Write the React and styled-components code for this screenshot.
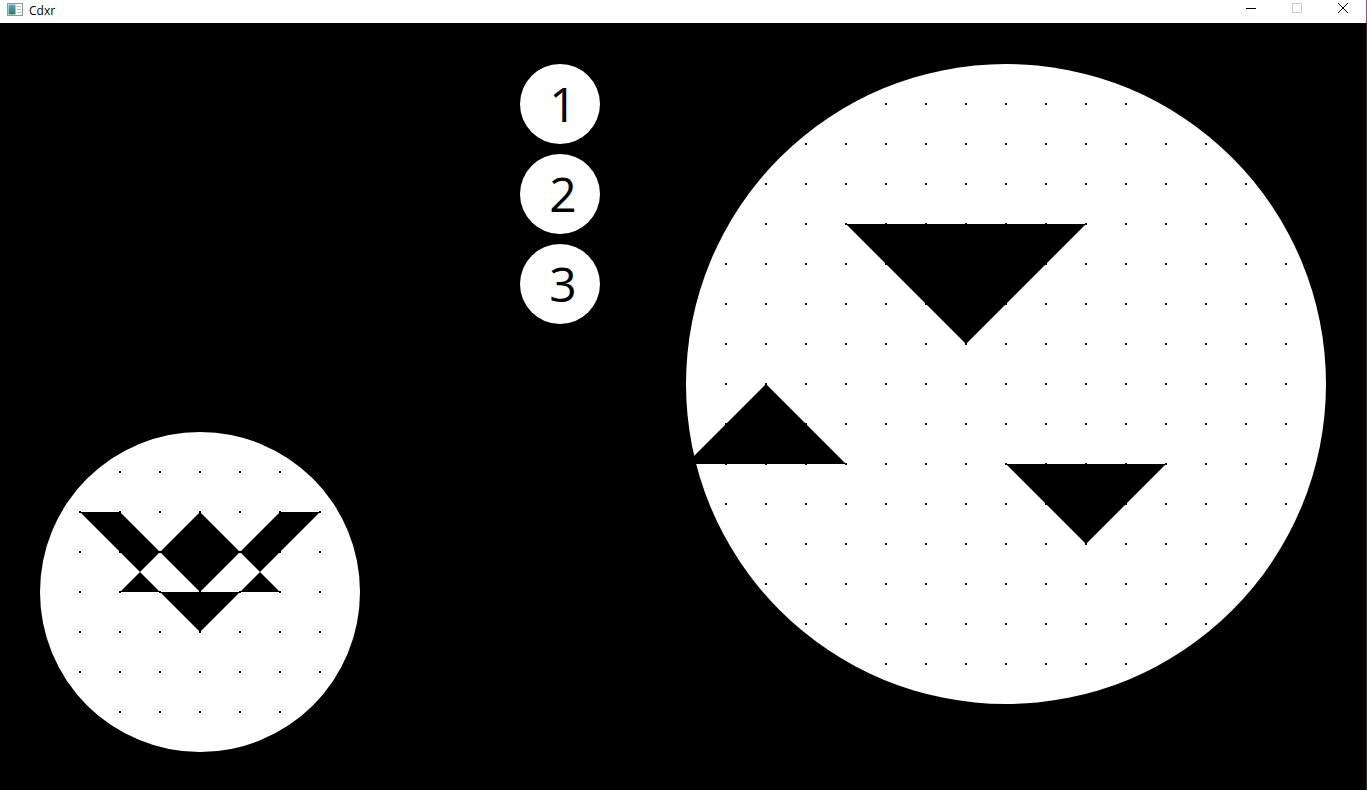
import React from "react";
import styled, { createGlobalStyle } from "styled-components";

const GlobalStyle = createGlobalStyle`
  html, body { margin: 0; padding: 0; background: #000; overflow: hidden; }
  * { box-sizing: border-box; }
`;

const Window = styled.div`
  width: 1367px;
  height: 790px;
  display: flex;
  flex-direction: column;
  background: #000;
`;

const TitleBar = styled.div`
  height: 23px;
  flex: none;
  display: flex;
  align-items: center;
  background: #fff;
  border-right: 1px solid #a04a86;
  padding-left: 7px;
`;

const AppIcon = styled.svg`
  width: 16px;
  height: 14px;
  flex: none;
  margin-top: -3px;
`;

const Title = styled.span`
  margin-left: 6px;
  font-family: "Open Sans", "Noto Sans", sans-serif;
  font-size: 12px;
  color: #000;
  flex: 1;
  margin-top: -2px;
`;

const Controls = styled.div`
  display: flex;
  height: 100%;
`;

const CtrlButton = styled.div`
  width: 46px;
  height: 100%;
  display: flex;
  align-items: flex-start;
  justify-content: center;
  padding-top: 2px;
`;

const Canvas = styled.div`
  flex: 1;
  position: relative;
  background: #000;
  border-right: 1px solid #4a1540;
`;

const NumberColumn = styled.div`
  position: absolute;
  left: 520px;
  top: 41px;
  display: flex;
  flex-direction: column;
  gap: 10px;
`;

const NumberBadge = styled.div`
  width: 80px;
  height: 80px;
  border-radius: 50%;
  background: #fff;
  display: flex;
  align-items: center;
  justify-content: center;
  padding-left: 6px;
  font-family: "Open Sans", "Noto Sans", sans-serif;
  font-size: 48px;
  line-height: 1;
  color: #000;
`;

const BoardSvg = styled.svg`
  position: absolute;
  left: ${(p) => p.$left}px;
  top: ${(p) => p.$top}px;
  overflow: visible;
`;

function Board({ left, top, size, shapes }) {
  const r = size / 2;
  const dots = [];
  for (let i = -8; i <= 8; i++) {
    for (let j = -8; j <= 8; j++) {
      const x = r + i * 40;
      const y = r + j * 40;
      if (Math.hypot(x - r, y - r) < r - 0.5) dots.push([x, y]);
    }
  }
  const d = shapes
    .map((pts) => "M" + pts.map((p) => p.join(" ")).join(" L") + " Z")
    .join(" ");
  return (
    <BoardSvg $left={left} $top={top} width={size} height={size} viewBox={`0 0 ${size} ${size}`}>
      <circle cx={r} cy={r} r={r} fill="#fff" />
      <g fill="#000" shapeRendering="crispEdges">
        {dots.map(([x, y]) => (
          <rect key={`${x}-${y}`} x={x - 1} y={y - 1} width="2" height="2" />
        ))}
      </g>
      <path d={d} fill="#000" fillRule="evenodd" />
    </BoardSvg>
  );
}

const smallShapes = [
  [[40, 80], [280, 80], [160, 200]],
  [[80, 160], [160, 80], [240, 160]],
  [[80, 80], [240, 80], [160, 160]],
];

const bigShapes = [
  [[160, 160], [400, 160], [280, 280]],
  [[0, 400], [80, 320], [160, 400]],
  [[320, 400], [480, 400], [400, 480]],
];

export default function App() {
  return (
    <>
      <GlobalStyle />
      <Window>
        <TitleBar>
          <AppIcon viewBox="0 0 16 14">
            <defs>
              <linearGradient id="ig" x1="0" y1="0" x2="0" y2="1">
                <stop offset="0" stopColor="#5aa7c8" />
                <stop offset="1" stopColor="#2f7a5a" />
              </linearGradient>
            </defs>
            <rect x="0.5" y="0.5" width="15" height="12" fill="#fff" stroke="#8a9aa8" />
            <rect x="1.5" y="1.5" width="7" height="10" fill="url(#ig)" />
            <rect x="10" y="3" width="4" height="1" fill="#b8c4cc" />
            <rect x="10" y="6" width="4" height="1" fill="#b8c4cc" />
            <rect x="10" y="9" width="4" height="1" fill="#b8c4cc" />
          </AppIcon>
          <Title>Cdxr</Title>
          <Controls>
            <CtrlButton>
              <svg width="12" height="12" viewBox="0 0 12 12">
                <line x1="1" y1="6.5" x2="11" y2="6.5" stroke="#000" strokeWidth="1" />
              </svg>
            </CtrlButton>
            <CtrlButton>
              <svg width="12" height="12" viewBox="0 0 12 12">
                <rect x="1.5" y="1.5" width="9" height="9" fill="none" stroke="#c8c8c8" strokeWidth="1" />
              </svg>
            </CtrlButton>
            <CtrlButton>
              <svg width="12" height="12" viewBox="0 0 12 12">
                <path d="M1 1 L11 11 M11 1 L1 11" stroke="#000" strokeWidth="1" />
              </svg>
            </CtrlButton>
          </Controls>
        </TitleBar>
        <Canvas>
          <NumberColumn>
            <NumberBadge>1</NumberBadge>
            <NumberBadge>2</NumberBadge>
            <NumberBadge>3</NumberBadge>
          </NumberColumn>
          <Board left={686} top={41} size={640} shapes={bigShapes} />
          <Board left={40} top={409} size={320} shapes={smallShapes} />
        </Canvas>
      </Window>
    </>
  );
}
